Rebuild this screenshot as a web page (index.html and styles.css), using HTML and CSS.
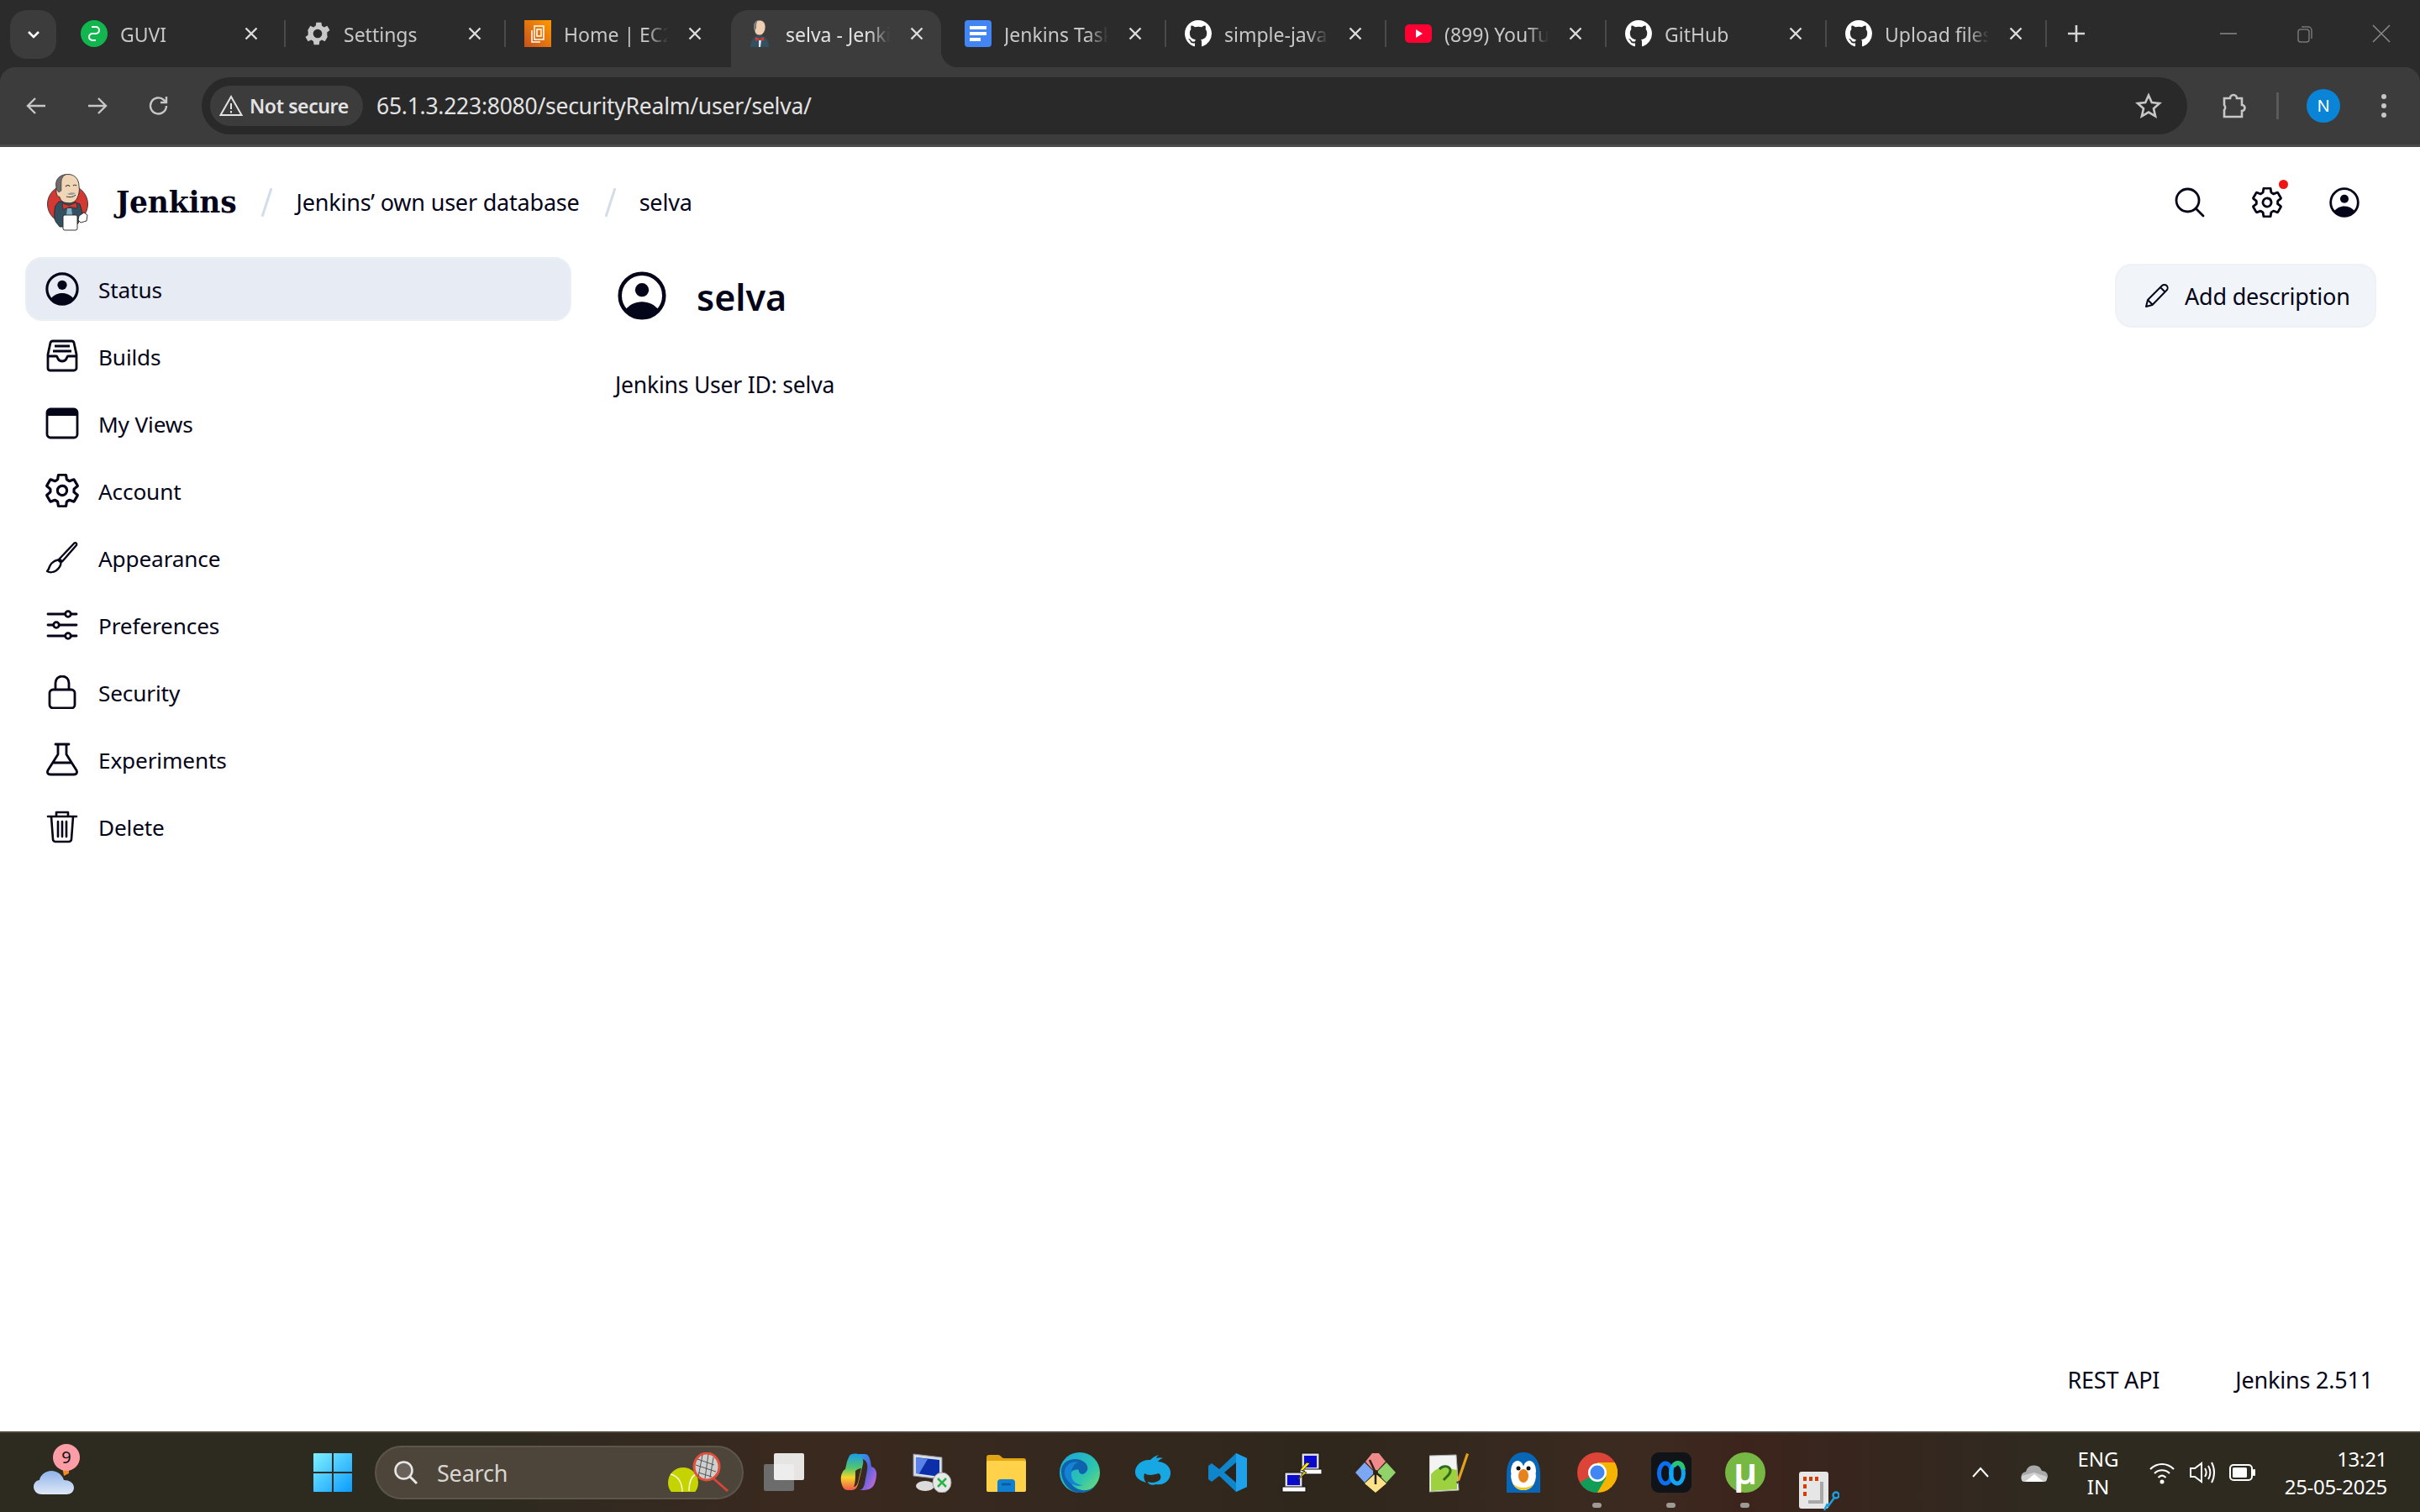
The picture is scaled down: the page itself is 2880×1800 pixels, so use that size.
FILE: index.html
```html
<!DOCTYPE html>
<html lang="en">
<head>
<meta charset="utf-8">
<title>selva - Jenkins</title>
<link rel="stylesheet" href="styles.css">
</head>
<body>
<svg class="sprite" xmlns="http://www.w3.org/2000/svg">
  <symbol id="i-close" viewBox="0 0 16 16"><path d="M1.500 1.500l13 13M14.500 1.500l-13 13" fill="none" stroke="currentColor" stroke-width="2.400"/></symbol>
  <symbol id="i-github" viewBox="0 0 16 16"><path fill="#fff" d="M8 0C3.58 0 0 3.58 0 8c0 3.54 2.29 6.53 5.47 7.59.4.07.55-.17.55-.38 0-.19-.01-.82-.01-1.49-2.01.37-2.53-.49-2.69-.94-.09-.23-.48-.94-.82-1.13-.28-.15-.68-.52-.01-.53.63-.01 1.08.58 1.23.82.72 1.21 1.87.87 2.33.66.07-.52.28-.87.51-1.07-1.78-.2-3.64-.89-3.64-3.95 0-.87.31-1.59.82-2.15-.08-.2-.36-1.02.08-2.12 0 0 .67-.21 2.2.82.64-.18 1.32-.27 2-.27s1.36.09 2 .27c1.53-1.04 2.2-.82 2.2-.82.44 1.1.16 1.92.08 2.12.51.56.82 1.27.82 2.15 0 3.07-1.87 3.75-3.65 3.95.29.25.54.73.54 1.48 0 1.07-.01 1.93-.01 2.2 0 .21.15.46.55.38A8.013 8.013 0 0016 8c0-4.42-3.58-8-8-8z"/></symbol>
  <symbol id="i-user" viewBox="0 0 512 512"><circle cx="256" cy="256" r="232" fill="none" stroke="#05051a" stroke-width="40"/><circle cx="256" cy="196" r="72" fill="#05051a"/><path fill="#05051a" d="M256 320c-72 0-132 32-172 82a232 232 0 0 0 344 0c-40-50-100-82-172-82z"/></symbol>
  <symbol id="i-gear" viewBox="28 28 456 456"><path fill="none" stroke="#05051a" stroke-width="36" stroke-linecap="round" stroke-linejoin="round" d="M262.29 192.31a64 64 0 1057.4 57.4 64.13 64.13 0 00-57.4-57.4zM416.39 256a154.34 154.34 0 01-1.53 20.79l45.21 35.46a10.81 10.81 0 012.45 13.75l-42.77 74a10.81 10.81 0 01-13.14 4.59l-44.9-18.08a16.11 16.11 0 00-15.17 1.75A164.48 164.48 0 01325 400.8a15.94 15.94 0 00-8.82 12.14l-6.73 47.89a11.08 11.08 0 01-10.68 9.17h-85.54a11.11 11.11 0 01-10.69-8.87l-6.72-47.82a16.07 16.07 0 00-9-12.22 155.3 155.3 0 01-21.46-12.57 16 16 0 00-15.11-1.71l-44.89 18.07a10.81 10.81 0 01-13.14-4.58l-42.77-74a10.8 10.8 0 012.45-13.75l38.21-30a16.05 16.05 0 006-14.08c-.36-4.17-.58-8.33-.58-12.5s.21-8.27.58-12.35a16 16 0 00-6.07-13.94l-38.19-30A10.81 10.81 0 0149.48 186l42.77-74a10.81 10.81 0 0113.14-4.59l44.9 18.08a16.11 16.11 0 0015.17-1.75A164.48 164.48 0 01187 111.2a15.94 15.94 0 008.82-12.14l6.73-47.89A11.08 11.08 0 01213.23 42h85.54a11.11 11.11 0 0110.69 8.87l6.72 47.82a16.07 16.07 0 009 12.22 155.3 155.3 0 0121.46 12.57 16 16 0 0015.11 1.71l44.89-18.07a10.81 10.81 0 0113.14 4.58l42.77 74a10.8 10.8 0 01-2.45 13.75l-38.21 30a16.05 16.05 0 00-6.05 14.08c.33 4.14.55 8.3.55 12.47z"/></symbol>
</svg>

<div class="chrome">
<div class="tabstrip">
  <div class="tabmenu"><svg class="ic20" viewBox="0 0 20 20"><path d="M4 7l6 6 6-6" fill="none" stroke="#fff" stroke-width="2.600"/></svg></div>
  <div class="tab tab-first"><svg class="fav" viewBox="0 0 32 32"><ellipse cx="16" cy="16" rx="16" ry="16" fill="#12b64f"/><path d="M13 8h5a3.500 3.500 0 0 1 0 8h-4a3.500 3.500 0 0 0 0 8h4" fill="none" stroke="#fff" stroke-width="2"/></svg><span class="tab-title">GUVI</span><svg class="tab-x"><use href="#i-close"/></svg></div>
  <div class="tab"><svg class="fav" viewBox="1.500 1.500 21 21"><path fill="#c8c8c8" fill-rule="evenodd" d="M19.400 13a7.500 7.500 0 0 0 0-2l2.100-1.600-2-3.400-2.500 1a7.500 7.500 0 0 0-1.700-1l-.4-2.700h-4l-.4 2.700a7.500 7.500 0 0 0-1.700 1l-2.500-1-2 3.400L4.600 11a7.500 7.500 0 0 0 0 2l-2.100 1.600 2 3.400 2.500-1a7.500 7.500 0 0 0 1.700 1l.4 2.700h4l.4-2.700a7.500 7.500 0 0 0 1.700-1l2.500 1 2-3.400zM12 15.500a3.500 3.500 0 1 1 0-7 3.500 3.500 0 0 1 0 7z"/></svg><span class="tab-title">Settings</span><svg class="tab-x"><use href="#i-close"/></svg></div>
  <div class="tab tab-before-active"><svg class="fav" viewBox="0 0 32 32"><defs><linearGradient id="ec2" x1="0" y1="1" x2="1" y2="0"><stop offset="0" stop-color="#c8511b"/><stop offset="1" stop-color="#ff9900"/></linearGradient></defs><rect width="32" height="32" fill="url(#ec2)"/><path d="M12 7h11v16H12zM9 12v14h10M15 11h5v8h-5z" fill="none" stroke="#fff" stroke-width="1.500"/></svg><span class="tab-title">Home | EC2 Instances</span><svg class="tab-x"><use href="#i-close"/></svg></div>
  <div class="tab tab-active"><svg class="fav" viewBox="0 0 32 32"><path d="M9 7c0-4 3-7 7-7s7 3 7 8c0 5-3 10-7 10s-6-3-6-6c-1-1-1-3-1-5z" fill="#efcfb2" stroke="#444" stroke-width=".8"/><path d="M9 8c0-4 2-7 5-8-2 3-2 6-2 10l-2 2z" fill="#7b7b7b"/><path d="M5 32c0-8 4-13 10-14 7 0 12 5 12 14z" fill="#335061"/><path d="M11 20l5 2 5-2v5l-5-2-5 2z" fill="#d33833"/><path d="M15 24h3l-1 8h-2z" fill="#dfe8ee"/></svg><span class="tab-title">selva - Jenkins</span><svg class="tab-x"><use href="#i-close"/></svg></div>
  <div class="tab"><svg class="fav" viewBox="0 0 32 32"><rect width="32" height="32" rx="4" fill="#4285f4"/><path d="M6 9h20M6 16h20M6 23h13" stroke="#fff" stroke-width="4"/></svg><span class="tab-title">Jenkins Tasks</span><svg class="tab-x"><use href="#i-close"/></svg></div>
  <div class="tab"><svg class="fav"><use href="#i-github"/></svg><span class="tab-title">simple-java-maven</span><svg class="tab-x"><use href="#i-close"/></svg></div>
  <div class="tab"><svg class="fav" viewBox="0 0 32 32"><rect y="5" width="32" height="22" rx="5" fill="#ff0033"/><path d="M13 11l8 5-8 5z" fill="#fff"/></svg><span class="tab-title">(899) YouTube</span><svg class="tab-x"><use href="#i-close"/></svg></div>
  <div class="tab"><svg class="fav"><use href="#i-github"/></svg><span class="tab-title">GitHub</span><svg class="tab-x"><use href="#i-close"/></svg></div>
  <div class="tab"><svg class="fav"><use href="#i-github"/></svg><span class="tab-title">Upload files</span><svg class="tab-x"><use href="#i-close"/></svg></div>
  <div class="newtab"><svg class="ic22" viewBox="0 0 22 22"><path d="M11 1v20M1 11h20" stroke="#d6d6d6" stroke-width="2.600"/></svg></div>
  <div class="winctl">
    <svg class="ic22" viewBox="0 0 22 22"><path d="M1 11h20" stroke="#8a8a8a" stroke-width="1.500"/></svg>
    <svg class="ic22" viewBox="0 0 22 22"><rect x="3" y="6" width="13" height="15" rx="3" fill="none" stroke="#777" stroke-width="1.500"/><path d="M7 3h8a4 4 0 0 1 4 4v10" fill="none" stroke="#777" stroke-width="1.500"/></svg>
    <svg class="ic22" viewBox="0 0 22 22"><path d="M1 1l20 20M21 1L1 21" stroke="#8a8a8a" stroke-width="1.500"/></svg>
  </div>
</div>

<div class="toolbar">
  <div class="navbtns">
    <svg class="ic28" viewBox="0 0 28 28"><path d="M25 14H4M13 5l-9 9 9 9" fill="none" stroke="#c7c7c7" stroke-width="2.400"/></svg>
    <svg class="ic28" viewBox="0 0 28 28"><path d="M3 14h21M15 5l9 9-9 9" fill="none" stroke="#c7c7c7" stroke-width="2.400"/></svg>
    <svg class="ic28" viewBox="0 0 28 28"><path d="M23 14a9.500 9.500 0 1 1-3-7l3 3M23 3v7h-7" fill="none" stroke="#c7c7c7" stroke-width="2.400"/></svg>
  </div>
  <div class="omnibox">
    <div class="chip"><svg class="ic30" viewBox="0 0 30 30"><path d="M15 4L2.500 26h25zM15 12v7M15 21v2.500" fill="none" stroke="#e3e3e3" stroke-width="2"/></svg><span>Not secure</span></div>
    <span class="url">65.1.3.223:8080/securityRealm/user/selva/</span>
    <svg class="star" viewBox="0 0 32 32"><path d="M16 3.500l3.800 8.600 9.200.9-7 6.200 2.100 9.200-8.100-4.800-8.100 4.800 2.100-9.200-7-6.200 9.200-.9z" fill="none" stroke="#c7c7c7" stroke-width="2.600"/></svg>
  </div>
  <svg class="ext" viewBox="0 0 32 32"><path d="M5 7h7a4 4 0 0 1 8 0h6v8a3.500 3.500 0 0 1 0 7v7H5v-8a4.500 4.500 0 0 0 0-6z" fill="none" stroke="#c7c7c7" stroke-width="2.600"/></svg>
  <span class="tb-divider"></span>
  <span class="avatar">N</span>
  <svg class="kebab" viewBox="0 0 8 32"><circle cx="4" cy="5" r="3" fill="#c7c7c7"/><circle cx="4" cy="16" r="3" fill="#c7c7c7"/><circle cx="4" cy="27" r="3" fill="#c7c7c7"/></svg>
</div>
<div class="toolbar-line"></div>
</div>

<div class="page">
  <header class="jk-header">
    <svg class="jk-logo" viewBox="0 0 50 68">
      <ellipse cx="24.500" cy="36" rx="24" ry="23" fill="#d33833" stroke="#3a3a3a" stroke-width="1"/>
      <path d="M10 38c-2 8-2 16 1 20l4 5h18l4-4 5-13-3-10-8-3H14z" fill="#335061" stroke="#222" stroke-width=".8"/>
      <path d="M11 14C10 6 17 .5 25 .5c8 0 13 6 13 14 1 5 0 10-2 14-2 5-7 7-12 6-5 0-8-3-9-7-2 0-4-3-4-6s0-5 0-8z" fill="#f0d6b7" stroke="#2a2a2a" stroke-width=".9"/>
      <path d="M11 15C9 7 15 1 22 1c-4 2-5 6-5 10 0 3 0 6 0 9l-3 2c-2-2-3-4-3-7z" fill="#6d6b6d" stroke="#2a2a2a" stroke-width=".5"/>
      <path d="M22 15c2-2 4-2 5 0M31 14c1-1 3-1 4 0" fill="none" stroke="#2a2a2a" stroke-width="1.100"/>
      <path d="M23 27c3 1 8 1 11-2" fill="none" stroke="#2a2a2a" stroke-width="1"/>
      <path d="M24 24c3-2 7-2 10-1-2 2-7 3-10 1z" fill="#49728b" opacity=".55"/>
      <path d="M18 35l8 2.500 9-3.500 1 7-9-1.500-8 3z" fill="#d33833" stroke="#222" stroke-width=".6"/>
      <path d="M24 41h5l1 8h-7z" fill="#81b0c4"/>
      <rect x="19" y="49" width="17" height="18" rx="2" fill="#fff" stroke="#222" stroke-width=".9"/>
      <path d="M38 50l6-4 4 3-1 7-7 2-3-3z" fill="#fff" stroke="#222" stroke-width=".9"/>
    </svg>
    <span class="jk-name">Jenkins</span>
    <span class="slash"></span>
    <span class="crumb">Jenkins’ own user database</span>
    <span class="slash"></span>
    <span class="crumb">selva</span>
    <div class="jk-actions">
      <svg class="act" viewBox="0 0 36 36"><circle cx="15.500" cy="15.500" r="13.500" fill="none" stroke="#05051a" stroke-width="2.800"/><path d="M25.500 25.500L34 34" stroke="#05051a" stroke-width="2.800" stroke-linecap="round"/></svg>
      <span class="gear-wrap"><svg class="act"><use href="#i-gear"/></svg><span class="dot"></span></span>
      <svg class="act"><use href="#i-user"/></svg>
    </div>
  </header>

  <div class="layout">
    <nav class="side">
      <a class="side-item current"><svg class="side-ic"><use href="#i-user"/></svg><span class="side-text">Status</span></a>
      <a class="side-item"><svg class="side-ic" viewBox="0 0 40 40"><path d="M3 18l3-14a3 3 0 0 1 3-2h22a3 3 0 0 1 3 2l3 14v16a3 3 0 0 1-3 3H5a3 3 0 0 1-2-3zM3 20h10c1 0 1 1 2 3s2 3 5 3 4-1 5-3 1-3 2-3h10M11 8h18M9 14h22" fill="none" stroke="#05051a" stroke-width="2.800" stroke-linejoin="round"/></svg><span class="side-text">Builds</span></a>
      <a class="side-item"><svg class="side-ic" viewBox="0 0 40 40"><rect x="2" y="3" width="36" height="34" rx="4" fill="none" stroke="#05051a" stroke-width="2.800"/><path d="M2 7a4 4 0 0 1 4-4h28a4 4 0 0 1 4 4v4H2z" fill="#05051a"/></svg><span class="side-text">My Views</span></a>
      <a class="side-item"><svg class="side-ic"><use href="#i-gear"/></svg><span class="side-text">Account</span></a>
      <a class="side-item"><svg class="side-ic" viewBox="0 0 40 40"><path d="M34.500 2.500c1.500-1 3.500.5 2.500 2.500L20 24.500l-3.500-3zM15 22.500c-3 .5-5.500 2-7.500 4-2 2-2.500 4-3.500 6.500-.5 1.500-1.500 2.500-2 3 3 1.800 7.500 1.500 10.500-.5 3.500-2.500 6-6 6-10z" fill="none" stroke="#05051a" stroke-width="2.400" stroke-linejoin="round"/></svg><span class="side-text">Appearance</span></a>
      <a class="side-item"><svg class="side-ic" viewBox="0 0 40 40"><path d="M3 7h20M31 7h6M3 20h6M17 20h20M3 33h20M31 33h6" stroke="#05051a" stroke-width="2.800" stroke-linecap="round"/><circle cx="27" cy="7" r="3.300" fill="none" stroke="#05051a" stroke-width="2.800"/><circle cx="13" cy="20" r="3.300" fill="none" stroke="#05051a" stroke-width="2.800"/><circle cx="27" cy="33" r="3.300" fill="none" stroke="#05051a" stroke-width="2.800"/></svg><span class="side-text">Preferences</span></a>
      <a class="side-item"><svg class="side-ic" viewBox="0 0 40 40"><rect x="5" y="17" width="30" height="22" rx="4" fill="none" stroke="#05051a" stroke-width="2.800"/><path d="M12 17V9a8 8 0 0 1 16 0v8" fill="none" stroke="#05051a" stroke-width="2.800"/></svg><span class="side-text">Security</span></a>
      <a class="side-item"><svg class="side-ic" viewBox="0 0 40 40"><path d="M12 2h16M15 2v12L3 33c-1.500 3 0 5 3 5h28c3 0 4.500-2 3-5L25 14V2M9 24h22" fill="none" stroke="#05051a" stroke-width="2.800" stroke-linecap="round" stroke-linejoin="round"/></svg><span class="side-text">Experiments</span></a>
      <a class="side-item"><svg class="side-ic" viewBox="0 0 40 40"><path d="M3 8h34M13 8V3h14v5M7 8l2 27a3 3 0 0 0 3 3h16a3 3 0 0 0 3-3l2-27M15 14v18M20 14v18M25 14v18" fill="none" stroke="#05051a" stroke-width="2.600" stroke-linecap="round" stroke-linejoin="round"/></svg><span class="side-text">Delete</span></a>
    </nav>
    <main class="content">
      <div class="title-row">
        <svg class="title-ic"><use href="#i-user"/></svg>
        <h1 class="title">selva</h1>
        <a class="add-btn"><svg class="pencil" viewBox="0 0 30 30"><path d="M2 28l2-8L21 3c1.500-1.500 4-1.500 5.500 0s1.500 4 0 5.500L9.500 26zM4 20l6 6M19 5l6 6" fill="none" stroke="#05051a" stroke-width="2" stroke-linejoin="round"/></svg>Add description</a>
      </div>
      <p class="userid">Jenkins User ID: selva</p>
    </main>
  </div>

  <footer class="jk-footer"><a>REST API</a><a>Jenkins 2.511</a></footer>
</div>

<div class="taskbar">
  <div class="weather">
    <svg class="weather-ic" viewBox="0 0 48 34"><defs><linearGradient id="cl" x1="0" y1="0" x2="0" y2="1"><stop offset="0" stop-color="#8fb4ea"/><stop offset="1" stop-color="#dfe8f6"/></linearGradient></defs><path d="M34 0h8v8l-6 3z" fill="#f28a1e"/><path d="M10 33C3 33 0 28 0 24s3-8 7-8c1-6 7-11 14-11 8 0 13 5 15 11 6 0 12 3 12 9 0 5-4 8-9 8z" fill="url(#cl)"/></svg>
    <span class="badge">9</span>
  </div>
  <svg class="winlogo" viewBox="0 0 46 46"><defs><linearGradient id="wl" x1="0" y1="0" x2="1" y2="1"><stop offset="0" stop-color="#7ff0ff"/><stop offset="1" stop-color="#0a9bff"/></linearGradient></defs><path fill="url(#wl)" d="M1 0h21v22H0V1a1 1 0 0 1 1-1zM24 0h21a1 1 0 0 1 1 1v21H24zM0 24h22v22H1a1 1 0 0 1-1-1zM24 24h22v21a1 1 0 0 1-1 1H24z"/></svg>
  <div class="tb-search">
    <svg class="ic30" viewBox="0 0 30 30"><circle cx="12.500" cy="12.500" r="10" fill="#6a625a" stroke="#e6e6e6" stroke-width="2.600"/><path d="M20 20l8 8" stroke="#e6e6e6" stroke-width="3"/></svg>
    <span class="tb-search-text">Search</span>
    <svg class="tennis" viewBox="0 0 74 48"><defs><clipPath id="bc"><rect width="74" height="47"/></clipPath></defs><g clip-path="url(#bc)"><circle cx="18" cy="36" r="18" fill="#c5d400"/><path d="M3 26c8 2 14 8 14 22M33 26c-6 3-8 9-8 20" fill="none" stroke="#f4f7c8" stroke-width="1.500"/></g><ellipse cx="46" cy="17" rx="15" ry="16" fill="#cfcfcf" stroke="#e0503c" stroke-width="3"/><path d="M35 8l20 7M33 15l24 8M36 24l16 5M41 3l-5 26M48 2l-4 29M54 6l-4 24" stroke="#555" stroke-width="1"/><path d="M54 31l17 15" stroke="#d8443a" stroke-width="3"/></svg>
  </div>
  <div class="tb-apps">
    <span class="app"><svg class="app-ic" viewBox="0 0 48 48"><rect x="0" y="14" width="36" height="32" rx="2" fill="#6c6c6c"/><rect x="12" y="1" width="36" height="32" rx="2" fill="#fff" opacity=".88"/></svg></span>
    <span class="app"><svg class="app-ic" viewBox="0 0 48 48"><defs><linearGradient id="cp1" x1="0" y1="0" x2="1" y2="1"><stop offset="0" stop-color="#1aa7f0"/><stop offset=".5" stop-color="#5b63e0"/><stop offset="1" stop-color="#e06ad0"/></linearGradient><linearGradient id="cp2" x1="0" y1="0" x2="0" y2="1"><stop offset="0" stop-color="#1a9be8"/><stop offset=".4" stop-color="#55c66a"/><stop offset=".65" stop-color="#f6d42c"/><stop offset="1" stop-color="#f0584a"/></linearGradient></defs><path d="M24 2h8c5 0 6 5 7 9l1 6c4 1 7 5 6 11-1 8-3 14-9 16-3 1-8 1-11 1 4-1 5-4 6-8l3-16c1-6 0-11-5-13-2-2-4-4-6-6z" fill="url(#cp1)"/><path d="M14 4c1-2 5-3 10-2 5 1 7 6 6 12l-5 20c-1 6-3 11-8 11h-5c-5 0-7-5-8-10-1-6 1-13 5-15l2-9c1-3 2-5 3-7z" fill="url(#cp2)"/><path d="M21 22c2-2 5-3 7-3l-4 17c-1 3-3 5-5 5 2-4 2-12 2-19z" fill="#3a2a20"/></svg></span>
    <span class="app"><svg class="app-ic" viewBox="0 0 48 48"><path d="M2 2l34 4v26L2 28z" fill="#d8dde6" stroke="#8a8f99"/><path d="M5 6l28 3v20L5 25z" fill="#0b2fa8"/><path d="M5 6l14 2-10 17H5z" fill="#5b82e6"/><ellipse cx="16" cy="40" rx="11" ry="6" fill="#dcdcdc"/><ellipse cx="36" cy="36" rx="11" ry="12" fill="#e7e7e7" stroke="#999"/><path d="M31 31l5 5-5 5M41 31l-5 5 5 5" fill="none" stroke="#2bb34a" stroke-width="2.500"/></svg></span>
    <span class="app"><svg class="app-ic" viewBox="0 0 48 48"><path d="M1 6a3 3 0 0 1 3-3h11c3 0 4 4 7 4h23a3 3 0 0 1 3 3v34a3 3 0 0 1-3 3H4a3 3 0 0 1-3-3z" fill="#e0a415"/><rect x="1" y="10" width="47" height="37" rx="2" fill="#ffd24a"/><path d="M14 47V36a4 4 0 0 1 4-4h13a4 4 0 0 1 4 4v11z" fill="#0e7fd1"/><path d="M19 38h11" stroke="#0a5a99" stroke-width="2.500"/></svg></span>
    <span class="app"><svg class="app-ic" viewBox="0 0 48 48"><defs><linearGradient id="ed" x1="0" y1="0" x2="1" y2="1"><stop offset="0" stop-color="#1aa5dc"/><stop offset=".6" stop-color="#2cc4b0"/><stop offset="1" stop-color="#7ee06a"/></linearGradient></defs><circle cx="24" cy="24" r="24" fill="url(#ed)"/><path d="M2 24c-1-10 8-17 18-16 11 1 17 10 11 16-4 4-9 1-8-3-7-2-13 4-11 12 2 8 11 13 20 12 6-1 10-4 12-8-3 7-10 11-19 11C12 48 3 37 2 24z" fill="#0f62ad"/><path d="M14 25c-1 8 6 14 14 14-9 3-20-3-22-13-2-9 8-17 17-14-5 0-9 7-9 13z" fill="#1583d3"/></svg></span>
    <span class="app"><svg class="app-ic" viewBox="0 0 48 48"><path d="M2 22C3 14 11 8 20 9c3-3 6-5 10-6-2 2-3 3-3 4 3-1 6-1 8 0-3 1-5 2-6 4 6 0 14 4 15 12 1 9-7 17-17 15-4 2-10 0-10-3 5 2 10 1 14-2 2-2 2-6-1-8-6 2-13 3-17 0-1 4-1 7 2 11C7 34 1 29 2 22z" fill="#17a8e3"/></svg></span>
    <span class="app"><svg class="app-ic" viewBox="0 0 48 48"><path d="M34 1l13 6v34l-13 6L14 28 5 35l-4-3V16l4-3 9 7z" fill="#0f85cc"/><path d="M34 1l13 6v34l-13 6z" fill="#1ea1ea"/><path d="M34 12v24L20 24z" fill="#2c2219"/></svg></span>
    <span class="app"><svg class="app-ic" viewBox="0 0 48 48"><rect x="24" y="1" width="21" height="21" fill="#ddd" stroke="#111"/><rect x="27" y="4" width="15" height="14" fill="#0a0ad0"/><rect x="22" y="20" width="26" height="6" fill="#fff" stroke="#111"/><rect x="4" y="24" width="21" height="18" fill="#ddd" stroke="#111"/><rect x="7" y="27" width="15" height="12" fill="#0a0ad0"/><rect x="1" y="41" width="28" height="6" fill="#fff" stroke="#111"/><path d="M30 12l-8 9 6 1-10 12 12-10-5-2 9-9z" fill="#ffe600" stroke="#111" stroke-width=".7"/></svg></span>
    <span class="app"><svg class="app-ic" viewBox="0 0 48 48"><path d="M24 24L12 11l8-10h8l8 10-2 2-10 11z" fill="#f08a8a"/><path d="M0 24l11-12 12 12-12 12z" fill="#7ba7f5"/><path d="M25 24l12-12 11 12-11 12z" fill="#8fd36a"/><path d="M11 37l13-12 13 12-13 11z" fill="#fde28a"/><circle cx="24" cy="24" r="3" fill="#2c2219"/><path d="M17 9l7 15 7 5M24 24v14" stroke="#2c2219" stroke-width="2.500" fill="none"/></svg></span>
    <span class="app"><svg class="app-ic" viewBox="0 0 48 48"><path d="M0 4l32-1 3 42-35 2z" fill="#f3f3f3" stroke="#aaa"/><path d="M2 26c8-10 16-9 31-5v23L2 46z" fill="#9ed13f"/><path d="M12 20c4-5 12-4 13 1 1 5-5 8-8 12" fill="none" stroke="#2d6b1e" stroke-width="3"/><path d="M44 1l3 1-11 32-3-1z" fill="#e4a11b"/><path d="M32 35l3-1-1 4z" fill="#333"/></svg></span>
    <span class="app"><svg class="app-ic" viewBox="0 0 48 48"><path d="M4 26C4 10 12 0 24 0s20 10 20 26v22H4z" fill="#0767b6"/><ellipse cx="17" cy="22" rx="8" ry="12" fill="#fff"/><ellipse cx="31" cy="22" rx="8" ry="12" fill="#fff"/><path d="M9 26c0 12 6 19 15 19s15-7 15-19c-4 4-8 4-15 4s-11 0-15-4z" fill="#fff"/><path d="M11 37c3 5 8 8 13 8s10-3 13-8c-3 3-8 5-13 5s-10-2-13-5z" fill="#f2c61f"/><circle cx="18" cy="19" r="2.500" fill="#111"/><circle cx="30" cy="19" r="2.500" fill="#111"/><ellipse cx="24" cy="28" rx="6" ry="8" fill="#e7831c"/></svg></span>
    <span class="app app-on"><svg class="app-ic" viewBox="0 0 48 48"><circle cx="24" cy="24" r="24" fill="#db4437"/><path d="M24 48a24 24 0 0 0 20.800-36H24z" fill="#f4b400"/><path d="M24 24L3.200 36A24 24 0 0 0 24 48l10.400-18z" fill="#0f9d58"/><circle cx="24" cy="24" r="11" fill="#fff"/><circle cx="24" cy="24" r="8.500" fill="#4285f4"/></svg></span>
    <span class="app app-on"><svg class="app-ic" viewBox="0 0 48 48"><rect width="48" height="48" rx="9" fill="#101418"/><ellipse cx="17" cy="25" rx="7.500" ry="12" fill="none" stroke="#0b6ff0" stroke-width="5"/><ellipse cx="31" cy="25" rx="7.500" ry="12" fill="none" stroke="#12a5f4" stroke-width="5"/><path d="M27 17c1-3 3-5 5-4.500 4 0 6 4 6.500 8" fill="none" stroke="#28c76f" stroke-width="5"/></svg></span>
    <span class="app app-on"><svg class="app-ic" viewBox="0 0 48 48"><circle cx="24" cy="24" r="24" fill="#76b843"/><text class="mu" x="24" y="38" text-anchor="middle">µ</text></svg></span>
    <span class="app app-low"><svg class="app-ic" viewBox="0 0 48 48"><rect x="0" y="0" width="35" height="44" rx="3" fill="#e6e6e6"/><path d="M5 6h4v5H5zM12 6h4v5h-4zM19 6h4v5h-4zM5 15h4v5H5zM5 24h4v5H5z" fill="#d83b01"/><path d="M27 12v24H11" fill="none" stroke="#a8a8a8" stroke-width="4"/><circle cx="44" cy="28" r="3.500" fill="none" stroke="#1a9fe0" stroke-width="2.500"/><path d="M42 31l-8 11M34 38l-4 8" stroke="#1a9fe0" stroke-width="2.500"/></svg></span>
  </div>
  <div class="tray">
    <span class="tray-cell chevron"><svg class="ic22" viewBox="0 0 22 22"><path d="M2 16l9-10 9 10" fill="none" stroke="#fff" stroke-width="2"/></svg></span>
    <span class="tray-cell cloud"><svg class="cloud-ic" viewBox="0 0 32 26"><path d="M7 24a6 6 0 0 1-1-12A10 10 0 0 1 25 11a6.500 6.500 0 0 1 1 13z" fill="#a9a9a9"/><path d="M5 24a4 4 0 0 1-1-8l12-3 12 4a3.500 3.500 0 0 1-1 7z" fill="#cfcfcf"/><path d="M5 24l11-9 11 9z" fill="#fff"/></svg></span>
    <span class="tray-cell lang"><span>ENG</span><span>IN</span></span>
    <span class="tray-cell status"><svg class="stat-ic" viewBox="0 0 32 32"><path d="M2 12c8-8 20-8 28 0M7 17c5-5 13-5 18 0M11.500 22c3-3 6-3 9 0" fill="none" stroke="#fff" stroke-width="2.200"/><circle cx="16" cy="27" r="2.500" fill="#fff"/></svg></span>
    <span class="tray-cell status"><svg class="stat-ic" viewBox="0 0 32 32"><path d="M2 11h5l8-6v22l-8-6H2zM19 11c2 3 2 7 0 10M23 8c3 5 3 11 0 16M27 4c4 7 4 17 0 24" fill="none" stroke="#fff" stroke-width="2"/></svg></span>
    <span class="tray-cell status"><svg class="stat-ic" viewBox="0 0 32 32"><rect x="1" y="7" width="26" height="18" rx="4" fill="none" stroke="#fff" stroke-width="2"/><rect x="4" y="10" width="17" height="12" rx="1.500" fill="#fff"/><rect x="28" y="12" width="3" height="8" rx="1" fill="#fff"/></svg></span>
    <span class="tray-cell clock"><span>13:21</span><span>25-05-2025</span></span>
  </div>
</div>
</body>
</html>
```

FILE: styles.css
```css
* { box-sizing: border-box; }
html, body { margin: 0; height: 100%; }
body {
  width: 2880px; height: 1800px; overflow: hidden;
  display: flex; flex-direction: column;
  font-family: "Noto Sans", "Open Sans", sans-serif;
  color: #05051a; background: #fff;
}
.sprite { display: none; }
svg { display: block; flex: none; }
.ic20 { width: 20px; height: 20px; }
.ic22 { width: 22px; height: 22px; }
.ic28 { width: 28px; height: 28px; }
.ic30 { width: 30px; height: 30px; }

/* browser chrome */
.chrome { flex: none; background: #2b2b2b; }
.tabstrip { height: 80px; display: flex; align-items: flex-start; padding-left: 12px; }
.tabmenu { width: 55px; height: 58px; margin-top: 12px; margin-right: 5px; border-radius: 20px; background: #3c3c3c; display: flex; align-items: center; justify-content: center; }
.tab { position: relative; width: 262px; height: 68px; margin-top: 12px; padding: 12px 0 0 24px; display: flex; align-items: flex-start; color: #c7c7c7; font-size: 23px; line-height: 32px; }
.tab-first { width: 266px; }
.tab::after { content: ""; position: absolute; right: -2px; top: 12px; width: 2px; height: 32px; background: #4a4a4a; }
.tab-before-active::after { display: none; }
.tab-active { background: #3c3c3c; border-radius: 20px 20px 0 0; color: #e3e3e3; width: 250px; margin-left: 8px; margin-right: 4px; padding-left: 18px; }
.tab-active::after { display: none; }
.tab-active::before { content: ""; position: absolute; right: -20px; bottom: 0; width: 20px; height: 20px; background: radial-gradient(circle at 100% 0, transparent 20px, #3c3c3c 20.500px); }
.fav { width: 32px; height: 32px; }
.tab-title { width: 124px; margin: 1px 0 0 15px; padding-right: 1px; white-space: nowrap; overflow: hidden; -webkit-mask-image: linear-gradient(90deg, #000 80%, transparent); mask-image: linear-gradient(90deg, #000 80%, transparent); }
.tab-x { width: 16px; height: 16px; margin: 8px 0 0 24px; color: #dcdcdc; }
.newtab { width: 22px; margin-left: 26px; margin-top: 29px; }
.winctl { margin-left: auto; display: flex; gap: 69px; margin-top: 29px; padding-right: 35px; }

.toolbar { height: 92px; background: #3c3c3c; border-radius: 18px 18px 0 0; display: flex; align-items: center; }
.navbtns { width: 240px; padding-left: 29px; display: flex; gap: 45px; flex: none; }
.omnibox { width: 2363px; height: 68px; flex: none; border-radius: 34px; background: #292929; display: flex; align-items: center; padding: 0 30px 0 10px; }
.chip { height: 48px; width: 182px; border-radius: 24px; background: #3c3c3c; display: flex; align-items: center; gap: 7px; padding-left: 10px; color: #e3e3e3; font-size: 23px; font-weight: 600; letter-spacing: -.4px; white-space: nowrap; }
.url { margin-left: 16px; font-size: 26.500px; color: #e3e3e3; letter-spacing: -.25px; white-space: nowrap; }
.star { width: 32px; height: 32px; margin-left: auto; }
.ext { width: 32px; height: 32px; margin-left: 39px; }
.tb-divider { width: 3px; height: 32px; background: #5a5a5a; margin-left: 35px; }
.avatar { width: 40px; height: 40px; border-radius: 50%; background: #0a84d6; color: #fff; font-size: 20px; line-height: 40px; text-align: center; margin-left: 33px; }
.kebab { width: 8px; height: 32px; margin-left: 48px; }
.toolbar-line { height: 3px; background: #4a4a4a; }

/* jenkins page */
.page { flex: 1; min-height: 0; display: flex; flex-direction: column; }
.jk-header { height: 131px; flex: none; display: flex; align-items: center; padding: 0 72px 0 56px; }
.jk-logo { width: 50px; height: 68px; }
.jk-name { font-family: "DejaVu Serif", serif; font-weight: 700; font-size: 34.500px; margin-left: 32px; letter-spacing: -.2px; }
.slash { width: 3px; height: 36px; background: #d3dde9; transform: rotate(18deg); margin: 0 33px 0 35px; border-radius: 2px; }
.crumb { font-size: 27px; letter-spacing: -.2px; white-space: nowrap; }
.jk-actions { margin-left: auto; display: flex; align-items: center; gap: 56px; }
.act { width: 36px; height: 36px; }
.gear-wrap { position: relative; display: block; }
.dot { position: absolute; right: -7px; top: -9px; width: 11px; height: 11px; border-radius: 50%; background: #f01414; }

.layout { flex: 1; min-height: 0; display: grid; grid-template-columns: 650px 1fr; column-gap: 52px; padding: 0 52px 0 30px; }
.side { display: flex; flex-direction: column; gap: 4px; }
.side-item { height: 76px; display: flex; align-items: center; gap: 23px; padding-left: 24px; font-size: 26.200px; letter-spacing: -.15px; border-radius: 20px; color: #05051a; }
.side-text { margin-top: 1px; }
.side-item.current { background: #e7ebf3; border: 2px solid #eaeef5; padding-left: 22px; }
.side-ic { width: 40px; height: 40px; }

.content { padding-top: 8px; }
.title-row { height: 76px; display: flex; align-items: center; }
.title-ic { width: 58px; height: 58px; margin-left: 3px; }
.title { margin: 3px 0 0 36px; font-size: 43px; font-weight: 600; line-height: 73px; }
.add-btn { margin-left: auto; width: 311px; height: 76px; display: flex; align-items: center; gap: 18px; padding-left: 33px; border-radius: 20px; background: #f1f4f8; border: 2px solid #eef1f6; font-size: 27px; letter-spacing: -.2px; white-space: nowrap; }
.pencil { width: 30px; height: 30px; }
.userid { margin: 50px 0 0; font-size: 26.500px; line-height: 36px; letter-spacing: -.2px; }

.jk-footer { height: 124px; flex: none; display: flex; justify-content: flex-end; align-items: center; gap: 90px; padding-right: 56px; font-size: 27px; letter-spacing: -.2px; }

/* taskbar */
.taskbar { height: 96px; flex: none; display: flex; align-items: center; padding-left: 40px; color: #fff; border-top: 2px solid #4a443a; background: linear-gradient(90deg, #2d2a20 0, #2d2a20 20%, #3a291f 33%, #2f271c 55%, #3c2a20 68%, #3c241c 72%, #2e2a20 85%, #2d2a20 100%); }
.weather { position: relative; width: 48px; height: 34px; margin-top: 20px; }
.weather-ic { width: 48px; height: 34px; }
.badge { position: absolute; left: 23px; top: -27px; width: 32px; height: 32px; border-radius: 50%; background: #ff9da6; color: #111; font-size: 20px; line-height: 32px; text-align: center; }
.winlogo { width: 46px; height: 46px; margin-left: 285px; }
.tb-search { width: 439px; height: 64px; margin-left: 27px; border-radius: 32px; background: #4e453a; border: 2px solid #5e5549; display: flex; align-items: center; padding-left: 20px; }
.tb-search-text { margin-left: 22px; font-size: 27px; letter-spacing: -.2px; color: #d8d6d2; }
.tennis { width: 74px; height: 48px; margin-left: auto; margin-right: 14px; }
.tb-apps { display: flex; margin-left: 4px; }
.app { position: relative; width: 88px; height: 94px; display: flex; align-items: center; justify-content: center; }
.app-ic { width: 48px; height: 48px; }
.app-on::after { content: ""; position: absolute; left: 38px; bottom: 5px; width: 11px; height: 6px; border-radius: 3px; background: #9e9a96; }
.app-low .app-ic { margin-top: 46px; }
.mu { font-family: "Noto Sans", sans-serif; font-size: 44px; font-weight: 600; fill: #fff; }
.tray { margin-left: auto; padding-right: 39px; display: flex; align-items: center; height: 94px; }
.tray-cell { display: flex; align-items: center; justify-content: center; }
.chevron, .cloud { width: 64px; }
.cloud-ic { width: 32px; height: 26px; }
.lang { width: 88px; flex-direction: column; font-size: 24px; line-height: 33px; margin-right: 8px; }
.status { width: 48px; }
.stat-ic { width: 32px; height: 32px; }
.clock { width: 148px; flex-direction: column; align-items: flex-end; font-size: 24px; line-height: 33px; letter-spacing: -.3px; }
```
